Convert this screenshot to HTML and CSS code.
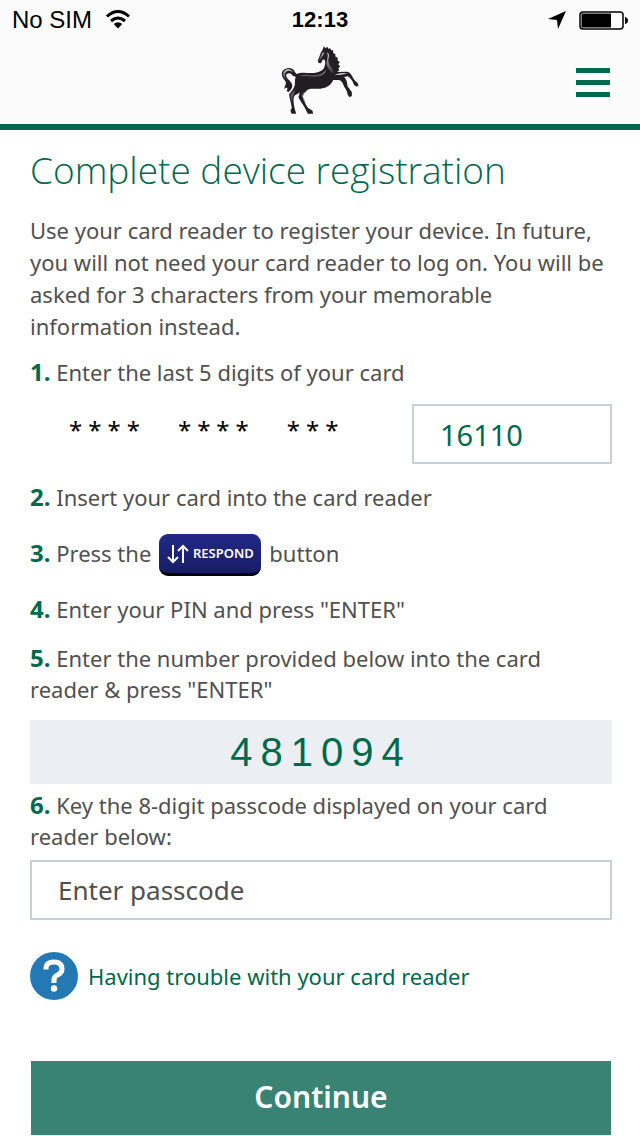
FILE: index.html
```html
<!DOCTYPE html>
<html lang="en">
<head>
<meta charset="utf-8">
<meta name="viewport" content="width=device-width, initial-scale=1">
<title>Complete device registration</title>
<link rel="stylesheet" href="styles.css">
</head>
<body>
<header class="header">
  <div class="status">
    <div class="status-left">
      <span>No SIM</span>
      <svg class="wifi" viewBox="0 0 26 20" aria-hidden="true">
        <path d="M2 6.5Q13-3.5 24 6.5M6 11Q13 5 20 11" fill="none" stroke="#000" stroke-width="3"/>
        <path d="M8.700 14Q13 10.500 17.300 14L13 18.500Z"/>
      </svg>
    </div>
    <span class="clock">12:13</span>
    <div class="status-right">
      <svg class="arrow" viewBox="0 0 18 18" aria-hidden="true"><path d="M18 0 10 18 9 9 0 8Z"/></svg>
      <svg class="battery" viewBox="0 0 49 19" aria-hidden="true">
        <rect x="1" y="1" width="43" height="17" rx="3" fill="#fff" stroke="#000" stroke-width="1.500"/>
        <path d="M2.500 2.500h29.500v14H2.500zM46 6q3 .5 3 3.500t-3 3.500z"/>
      </svg>
    </div>
  </div>
  <div class="brand">
    <svg class="horse" viewBox="34 14 236 210" role="img" aria-label="Black horse">
      <defs>
        <linearGradient id="sheen" x1="0" y1="0" x2="0" y2="1"><stop offset="0" stop-color="#c4c4c8"/><stop offset="1" stop-color="#343237"/></linearGradient>
      </defs>
      <path fill="#201e21" d="M80 101C92 95 110 98 127 98C146 97 160 91 164 79C168 68 166 60 162 57C158 57 157 63 153 69L146 68L144 60C150 50 150 38 157 31L162 18L167 24L173 19L175 25L181 24L184 30L190 30L190 38L197 42L196 48L204 53L203 60L210 66L205 72L211 78L206 84L208 90L202 95L229 94C239 94 244 101 247 108C251 116 256 123 263 127L266 135L261 139L253 134C249 123 242 112 234 108L223 110C230 116 232 126 233 138L246 155V168L238 170L233 162C233 153 227 145 223 139C219 129 216 121 207 119L190 119C186 132 172 143 151 145C135 147 119 142 110 151C105 157 99 161 98 166C98 176 107 190 114 202L128 211L130 220H114L108 208C102 195 88 178 86 170L90 156C84 162 77 162 73 168C69 178 72 193 75 207L79 220H65L62 211L66 202C64 187 58 172 58 162C64 153 73 145 75 133C76 124 74 116 78 110L69 106C65 99 57 96 51 101C45 107 53 115 61 123C71 134 69 146 56 155L50 152C57 143 49 138 44 147C42 137 53 131 46 122C38 113 32 100 39 91C49 80 70 80 75 95Z"/>
      <g fill="url(#sheen)">
        <path d="M42 94C49 83 64 83 70 97C58 87 50 92 46 99C41 109 51 116 57 124C43 112 36 104 42 94Z"/>
        <path d="M84 111C98 99 116 105 136 104C151 104 163 98 168 89C166 106 145 111 128 110C111 110 94 105 84 111Z"/>
        <path d="M170 36C185 40 174 54 176 64C179 80 194 87 190 101C178 90 169 78 170 65C172 53 177 44 170 36Z"/>
        <path d="M148 59L157 39L164 36C159 48 156 51 148 64Z"/>
        <path d="M195 103C210 96 226 97 233 100C221 100 206 107 195 103ZM63 162L76 149C73 162 66 171 68 190C64 180 60 169 63 162ZM94 166L105 151L99 169L109 190Z"/>
      </g>
    </svg>
    <button class="menu" type="button" aria-label="Menu"><span></span><span></span><span></span></button>
  </div>
</header>
<main class="content">
  <h1 class="title">Complete device registration</h1>
  <p class="intro">Use your card reader to register your device. In future, you will not need your card reader to log on. You will be asked for 3 characters from your memorable information instead.</p>
  <form class="form">
    <label class="step" for="digits"><b>1.</b> Enter the last 5 digits of your card</label>
    <div class="card-row">
      <div class="mask"><span>****</span><span>****</span><span>***</span></div>
      <input class="field digits" id="digits" type="text" inputmode="numeric" value="16110">
    </div>
    <p class="step insert"><b>2.</b> Insert your card into the card reader</p>
    <p class="step press"><span><b>3.</b> Press the</span>
      <span class="respond">
        <svg viewBox="0 0 22 20" aria-hidden="true"><path d="M6 1v17M1 13l5 5 5-5M16 19V2M11 7l5-5 5 5" fill="none" stroke="#fff" stroke-width="2"/></svg>
        RESPOND
      </span>
      <span>button</span></p>
    <p class="step pin"><b>4.</b> Enter your PIN and press "ENTER"</p>
    <p class="step number"><b>5.</b> Enter the number provided below into the card reader &amp; press "ENTER"</p>
    <output class="code">481094</output>
    <label class="step key" for="passcode"><b>6.</b> Key the 8-digit passcode displayed on your card reader below:</label>
    <input class="field passcode" id="passcode" type="text" inputmode="numeric" placeholder="Enter passcode">
    <a class="help" href="#help">
      <svg class="help-icon" viewBox="0 0 48 48" aria-hidden="true">
        <circle cx="24" cy="24" r="24" fill="#2479b5"/>
        <path d="M16 17.500V16Q16 10 24 10Q32 10 32 17Q32 21 27.500 23Q24 24.500 24 28V31" fill="none" stroke="#fff" stroke-width="5"/>
        <circle cx="24" cy="36.500" r="3.200" fill="#fff"/>
      </svg>
      Having trouble with your card reader
    </a>
    <button class="continue" type="submit">Continue</button>
  </form>
</main>
</body>
</html>
```
FILE: styles.css
```css
* { box-sizing: border-box; }
body {
  margin: 0;
  background: #fff;
  color: #505050;
  font-family: "Noto Sans", sans-serif;
  font-size: 22px;
  line-height: 32px;
}
h1, p { margin: 0; }
b { color: #006a4d; font-size: 24px; font-weight: 700; line-height: 24px; }
.header { background: #fbfbfb; border-bottom: 6px solid #006a4d; }
.status {
  display: grid;
  grid-template-columns: 1fr auto 1fr;
  align-items: center;
  height: 40px;
  padding: 0 12px;
  color: #000;
  font: 24px/40px "Liberation Sans", Arial, sans-serif;
}
.status-left, .status-right { display: flex; align-items: center; gap: 13px; }
.status-right { justify-content: flex-end; }
.clock { font-weight: 700; font-size: 22px; }
.wifi { width: 26px; height: 20px; }
.arrow { width: 18px; height: 18px; }
.battery { width: 49px; height: 19px; }
.brand {
  display: grid;
  grid-template-columns: 1fr auto 1fr;
  align-items: center;
  height: 84px;
  padding: 0 30px;
}
.horse { grid-column: 2; width: 79px; height: 70px; margin-bottom: 4px; }
.menu {
  display: grid;
  gap: 7px;
  justify-self: end;
  width: 34px;
  padding: 0;
  border: 0;
  background: none;
}
.menu span { height: 5px; background: #006a4d; }
.content { padding: 12px 28px 0 30px; }
.title {
  margin-bottom: 16px;
  color: #006a4d;
  font-family: "Open Sans", sans-serif;
  font-size: 37px;
  font-weight: 300;
  line-height: 56px;
}
.form { display: flex; flex-direction: column; }
.intro { margin-bottom: 15px; }
.step { line-height: 31px; }
.card-row { display: flex; justify-content: space-between; margin: 16px 0; }
.mask {
  display: flex;
  gap: 32px;
  padding-left: 39px;
  color: #000;
  font-size: 24px;
  line-height: 52px;
  letter-spacing: 6px;
}
.field {
  width: 100%;
  height: 60px;
  padding: 0 26px;
  border: 2px solid #c6d0d6;
  border-radius: 0;
  background: #fff;
  font-family: inherit;
  font-size: 26px;
}
.digits { width: 200px; color: #006a4d; font-size: 29px; }
.passcode::placeholder { color: #505050; opacity: 1; }
.insert { margin: 2px 0 21px; }
.press { display: flex; align-items: center; gap: 8px; margin-bottom: 18px; }
.press > span:not(.respond) { padding-bottom: 3px; }
.respond {
  display: flex;
  align-items: center;
  justify-content: center;
  gap: 4px;
  width: 102px;
  height: 42px;
  border-bottom: 3px solid #000;
  border-radius: 9px;
  background: linear-gradient(#212987, #171d62);
  color: #fff;
  font-size: 13px;
  font-weight: 600;
}
.respond svg { width: 22px; height: 20px; }
.number { margin: 18px 0 15px; }
.code {
  background: #ebeff3;
  color: #006a4d;
  font: 40px/64px "Liberation Sans", Arial, sans-serif;
  letter-spacing: 8px;
  text-align: center;
}
.key { margin: 6px 0 8px; }
.help {
  display: flex;
  align-items: center;
  align-self: flex-start;
  gap: 10px;
  margin: 32px 0 61px;
  color: #006a4d;
  text-decoration: none;
}
.help-icon { width: 48px; height: 48px; }
.continue {
  height: 74px;
  margin: 0 1px;
  padding: 0 0 3px;
  border: 0;
  background: #388373;
  color: #fff;
  font: 600 30px/64px "Noto Sans", sans-serif;
}
```
